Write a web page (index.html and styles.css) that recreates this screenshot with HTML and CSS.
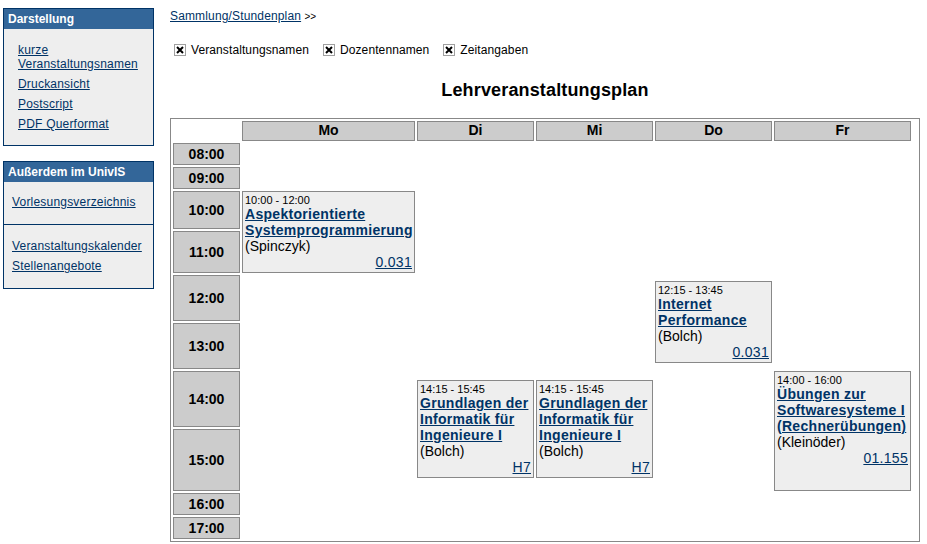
FILE: index.html
```html
<!DOCTYPE html>
<html lang="de">
<head>
    <meta charset="UTF-8">
    <title>UnivIS - Stundenplan</title>
    <link rel="stylesheet" href="styles.css">
</head>
<body>
    <div class="page">
        <div class="sidebar">
            <div class="box">
                <div class="box-title">Darstellung</div>
                <ul class="box-links">
                    <li><a href="#">kurze Veranstaltungsnamen</a></li>
                    <li><a href="#">Druckansicht</a></li>
                    <li><a href="#">Postscript</a></li>
                    <li><a href="#">PDF Querformat</a></li>
                </ul>
            </div>

            <div class="box">
                <div class="box-title">Außerdem im UnivIS</div>
                <ul class="box-links tight">
                    <li><a href="#">Vorlesungsverzeichnis</a></li>
                </ul>
                <ul class="box-links tight split">
                    <li><a href="#">Veranstaltungskalender</a></li>
                    <li><a href="#">Stellenangebote</a></li>
                </ul>
            </div>
        </div>

        <div class="main">
            <div class="crumb"><a href="#">Sammlung/Stundenplan</a> <span class="more">&gt;&gt;</span></div>

            <div class="options">
                <label class="option">
                    <svg class="cb" width="12" height="12" viewBox="0 0 12 12"><rect x="0.5" y="0.5" width="11" height="11" fill="#fff" stroke="#a0a0a0"/><path d="M3 3L9 9M9 3L3 9" stroke="#000" stroke-width="2"/></svg>
                    <span>Veranstaltungsnamen</span>
                </label>
                <label class="option">
                    <svg class="cb" width="12" height="12" viewBox="0 0 12 12"><rect x="0.5" y="0.5" width="11" height="11" fill="#fff" stroke="#a0a0a0"/><path d="M3 3L9 9M9 3L3 9" stroke="#000" stroke-width="2"/></svg>
                    <span>Dozentennamen</span>
                </label>
                <label class="option">
                    <svg class="cb" width="12" height="12" viewBox="0 0 12 12"><rect x="0.5" y="0.5" width="11" height="11" fill="#fff" stroke="#a0a0a0"/><path d="M3 3L9 9M9 3L3 9" stroke="#000" stroke-width="2"/></svg>
                    <span>Zeitangaben</span>
                </label>
            </div>

            <h1 class="plan-title">Lehrveranstaltungsplan</h1>

            <div class="plan">
                <!-- days -->
                <div class="day col-mo">Mo</div>
                <div class="day col-di">Di</div>
                <div class="day col-mi">Mi</div>
                <div class="day col-do">Do</div>
                <div class="day col-fr">Fr</div>

                <!-- hours -->
                <div class="hour h08">08:00</div>
                <div class="hour h09">09:00</div>
                <div class="hour h10">10:00</div>
                <div class="hour h11">11:00</div>
                <div class="hour h12">12:00</div>
                <div class="hour h13">13:00</div>
                <div class="hour h14">14:00</div>
                <div class="hour h15">15:00</div>
                <div class="hour h16">16:00</div>
                <div class="hour h17">17:00</div>

                <!-- events -->
                <div class="event col-mo ev-mo">
                    <div class="ev-time">10:00 - 12:00</div>
                    <a class="ev-title" href="#">Aspektorientierte Systemprogrammierung</a>
                    <div class="ev-who">(Spinczyk)</div>
                    <div class="ev-room"><a href="#">0.031</a></div>
                </div>

                <div class="event col-do ev-do">
                    <div class="ev-time">12:15 - 13:45</div>
                    <a class="ev-title" href="#">Internet Performance</a>
                    <div class="ev-who">(Bolch)</div>
                    <div class="ev-room"><a href="#">0.031</a></div>
                </div>

                <div class="event col-di ev-gdi">
                    <div class="ev-time">14:15 - 15:45</div>
                    <a class="ev-title" href="#">Grundlagen der Informatik für Ingenieure I</a>
                    <div class="ev-who">(Bolch)</div>
                    <div class="ev-room"><a href="#">H7</a></div>
                </div>

                <div class="event col-mi ev-gdi">
                    <div class="ev-time">14:15 - 15:45</div>
                    <a class="ev-title" href="#">Grundlagen der Informatik für Ingenieure I</a>
                    <div class="ev-who">(Bolch)</div>
                    <div class="ev-room"><a href="#">H7</a></div>
                </div>

                <div class="event col-fr ev-fr">
                    <div class="ev-time">14:00 - 16:00</div>
                    <a class="ev-title" href="#">Übungen zur Softwaresysteme I (Rechnerübungen)</a>
                    <div class="ev-who">(Kleinöder)</div>
                    <div class="ev-room"><a href="#">01.155</a></div>
                </div>
            </div>
        </div>
    </div>
</body>
</html>
```

FILE: styles.css
```css
body {
    margin: 0;
    font-family: "Liberation Sans", Arial, Helvetica, sans-serif;
    font-size: 12px;
    color: #000;
    background-color: #fff;
}

a {
    color: #003366;
}

.page {
    display: flex;
    align-items: flex-start;
    padding-left: 3px;
}

/* sidebar */

.sidebar {
    width: 151px;
    padding-top: 8px;
}

.box {
    border: 1px solid #003366;
    background-color: #eeeeee;
    margin-bottom: 15px;
}

.box-title {
    height: 20px;
    line-height: 20px;
    padding-left: 4px;
    background-color: #336699;
    color: #fff;
    font-weight: bold;
}

.box-links {
    list-style: none;
    margin: 0;
    padding: 14px 4px 14px 14px;
    line-height: 14px;
}

.box-links li + li {
    margin-top: 6px;
}

.box-links a {
    letter-spacing: 0.2px;
}

.box-links.tight {
    padding: 13px 4px 15px 8px;
}

.box-links.split {
    border-top: 1px solid #003366;
    padding-top: 14px;
}

/* main */

.main {
    margin-left: 16px;
    padding-top: 9px;
    width: 750px;
}

.crumb {
    line-height: 14px;
}

.crumb a {
    letter-spacing: 0.15px;
}

.more {
    font-size: 10px;
}

.options {
    display: flex;
    align-items: center;
    gap: 14px;
    margin-top: 19px;
    padding-left: 4px;
    line-height: 14px;
}

.option {
    display: flex;
    align-items: center;
    gap: 5px;
    letter-spacing: 0.1px;
}

.cb {
    display: block;
}

.plan-title {
    margin: 22px 0 17px;
    font-size: 18px;
    line-height: 22px;
    letter-spacing: 0.15px;
    text-align: center;
}

/* timetable */

.plan {
    display: grid;
    grid-template-columns: 67px 173px 117px 117px 117px 137px;
    grid-template-rows: 20px 22px 22px 38px 42px 4px 40px 40px 4px 7px 47px 49px 11px 22px 22px;
    gap: 2px;
    padding: 2px 8px 2px 2px;
    border: 1px solid #888;
}

.day,
.hour {
    background-color: #cccccc;
    border: 1px solid #888;
    font-size: 14px;
    font-weight: bold;
}

.day {
    grid-row: 1;
    line-height: 17px;
    text-align: center;
}

.hour {
    grid-column: 1;
    display: flex;
    align-items: center;
    justify-content: center;
}

.col-mo { grid-column: 2; }
.col-di { grid-column: 3; }
.col-mi { grid-column: 4; }
.col-do { grid-column: 5; }
.col-fr { grid-column: 6; }

.h08 { grid-row: 2; }
.h09 { grid-row: 3; }
.h10 { grid-row: 4; }
.h11 { grid-row: 5; }
.h12 { grid-row: 6 / 8; }
.h13 { grid-row: 8 / 10; }
.h14 { grid-row: 10 / 12; }
.h15 { grid-row: 12 / 14; }
.h16 { grid-row: 14; }
.h17 { grid-row: 15; }

.ev-mo { grid-row: 4 / 6; }
.ev-do { grid-row: 7 / 9; }
.ev-gdi { grid-row: 11 / 13; }
.ev-fr { grid-row: 10 / 14; }

.event {
    background-color: #eeeeee;
    border: 1px solid #888;
    padding: 2px 2px 1px;
    font-size: 14px;
    line-height: 16px;
}

.ev-time {
    font-size: 11px;
    line-height: 12px;
}

.ev-title {
    display: block;
    font-weight: bold;
    letter-spacing: 0.3px;
}

.ev-room {
    text-align: right;
}

.ev-room a {
    letter-spacing: 0.3px;
}
```
